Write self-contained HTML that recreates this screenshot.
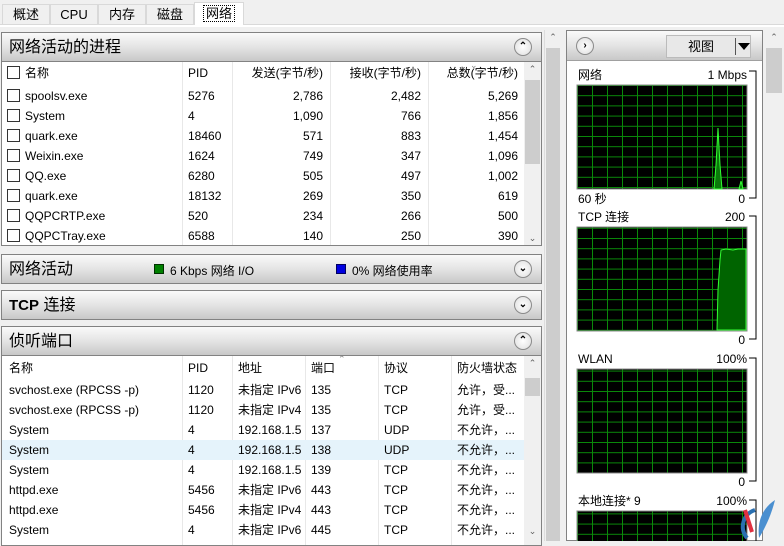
<!DOCTYPE html><html><head><meta charset="utf-8"><style>
*{margin:0;padding:0;box-sizing:border-box}
body{width:784px;height:541px;overflow:hidden;background:#f0f0f0;font-family:"Liberation Sans","Noto Sans CJK SC",sans-serif;font-size:12px;color:#000;position:relative}
.a{position:absolute}
.tab{position:absolute;top:4px;height:20px;border:1px solid #d9d9d9;border-bottom:none;background:#f0f0f0;font-size:13px;line-height:19px;text-align:center}
.hdr{position:absolute;left:1px;width:541px;height:30px;border:1px solid #828282;background:linear-gradient(#fafafa,#e4e4e4 50%,#c8c8c8);font-size:16px;line-height:29px;padding:0 0 0 7px}
.hdr span{line-height:normal}
.btn{position:absolute;width:18px;height:18px;border-radius:50%;border:1px solid #8a8a8a;background:radial-gradient(#fff,#ddd);font-size:10px;text-align:center;line-height:16px;font-weight:bold}
.tbl{position:absolute;left:1px;width:541px;background:#fff;border:1px solid #828282;border-top:none;overflow:hidden}
.row{position:absolute;left:0;height:20px;width:522px;line-height:20px}
.row span{position:absolute;top:0}
.cb{position:absolute;width:13px;height:13px;border:1px solid #333;top:3px;left:5px;background:#fff}
.vl{position:absolute;width:1px;background:#e8e8e8;top:0}
.sb{position:absolute;background:#f0f0f0}
.r{text-align:right}
</style></head><body>
<div class="a" style="left:0;top:24px;width:784px;height:3px;border-top:1px solid #d9d9d9;background:#fff"></div>
<div class="tab" style="left:2px;width:48px">概述</div>
<div class="tab" style="left:50px;width:48px">CPU</div>
<div class="tab" style="left:98px;width:48px">内存</div>
<div class="tab" style="left:146px;width:48px">磁盘</div>
<div class="tab" style="left:194px;top:2px;height:23px;width:50px;background:#fff;line-height:21px"><span style="border:1px dotted #000;padding:0 2px">网络</span></div>

<!-- left panel -->
<div class="hdr" style="top:32px">网络活动的进程<div class="btn" style="right:9px;top:5px">⌃</div></div>
<div class="tbl" style="top:62px;height:184px">
 <div class="vl" style="left:180px;height:184px"></div><div class="vl" style="left:230px;height:184px"></div><div class="vl" style="left:328px;height:184px"></div><div class="vl" style="left:426px;height:184px"></div>
 <div class="row" style="top:1px"><div class="cb"></div><span style="left:23px">名称</span><span style="left:186px">PID</span><span class="r" style="left:232px;width:89px">发送(字节/秒)</span><span class="r" style="left:330px;width:89px">接收(字节/秒)</span><span class="r" style="left:428px;width:88px">总数(字节/秒)</span><span style="left:468px;top:-8px;font-size:9px;color:#888">⌄</span></div>
 <div class="row" style="top:24px"><div class="cb"></div><span style="left:23px">spoolsv.exe</span><span style="left:186px">5276</span><span class="r" style="left:232px;width:89px">2,786</span><span class="r" style="left:330px;width:89px">2,482</span><span class="r" style="left:428px;width:88px">5,269</span></div>
 <div class="row" style="top:44px"><div class="cb"></div><span style="left:23px">System</span><span style="left:186px">4</span><span class="r" style="left:232px;width:89px">1,090</span><span class="r" style="left:330px;width:89px">766</span><span class="r" style="left:428px;width:88px">1,856</span></div>
 <div class="row" style="top:64px"><div class="cb"></div><span style="left:23px">quark.exe</span><span style="left:186px">18460</span><span class="r" style="left:232px;width:89px">571</span><span class="r" style="left:330px;width:89px">883</span><span class="r" style="left:428px;width:88px">1,454</span></div>
 <div class="row" style="top:84px"><div class="cb"></div><span style="left:23px">Weixin.exe</span><span style="left:186px">1624</span><span class="r" style="left:232px;width:89px">749</span><span class="r" style="left:330px;width:89px">347</span><span class="r" style="left:428px;width:88px">1,096</span></div>
 <div class="row" style="top:104px"><div class="cb"></div><span style="left:23px">QQ.exe</span><span style="left:186px">6280</span><span class="r" style="left:232px;width:89px">505</span><span class="r" style="left:330px;width:89px">497</span><span class="r" style="left:428px;width:88px">1,002</span></div>
 <div class="row" style="top:124px"><div class="cb"></div><span style="left:23px">quark.exe</span><span style="left:186px">18132</span><span class="r" style="left:232px;width:89px">269</span><span class="r" style="left:330px;width:89px">350</span><span class="r" style="left:428px;width:88px">619</span></div>
 <div class="row" style="top:144px"><div class="cb"></div><span style="left:23px">QQPCRTP.exe</span><span style="left:186px">520</span><span class="r" style="left:232px;width:89px">234</span><span class="r" style="left:330px;width:89px">266</span><span class="r" style="left:428px;width:88px">500</span></div>
 <div class="row" style="top:164px"><div class="cb"></div><span style="left:23px">QQPCTray.exe</span><span style="left:186px">6588</span><span class="r" style="left:232px;width:89px">140</span><span class="r" style="left:330px;width:89px">250</span><span class="r" style="left:428px;width:88px">390</span></div>
 <div class="sb" style="left:522px;top:0;width:17px;height:184px"><div style="position:absolute;left:1px;top:18px;width:15px;height:84px;background:#cdcdcd"></div><div style="position:absolute;top:2px;width:17px;text-align:center;font-size:9px;color:#606060">⌃</div><div style="position:absolute;bottom:2px;width:17px;text-align:center;font-size:9px;color:#606060">⌄</div></div>
</div>

<div class="hdr" style="top:254px">网络活动<span class="a" style="left:152px;top:9px;width:10px;height:10px;background:#008000;border:1px solid #003000"></span><span class="a" style="left:168px;top:7px;font-size:12px">6 Kbps 网络 I/O</span><span class="a" style="left:334px;top:9px;width:10px;height:10px;background:#0000e0;border:1px solid #000060"></span><span class="a" style="left:350px;top:7px;font-size:12px">0% 网络使用率</span><div class="btn" style="right:9px;top:5px">⌄</div></div>
<div class="hdr" style="top:290px"><b style="font-size:15px">TCP</b> 连接<div class="btn" style="right:9px;top:5px">⌄</div></div>
<div class="hdr" style="top:326px">侦听端口<div class="btn" style="right:9px;top:5px">⌃</div></div>
<div class="tbl" style="top:356px;height:190px">
 <div class="vl" style="left:180px;height:190px"></div><div class="vl" style="left:230px;height:190px"></div><div class="vl" style="left:303px;height:190px"></div><div class="vl" style="left:376px;height:190px"></div><div class="vl" style="left:449px;height:190px"></div>
 <div class="row" style="background:#e5f3fb;top:84px"></div>
 <div class="row" style="top:2px"><span style="left:7px">名称</span><span style="left:186px">PID</span><span style="left:236px">地址</span><span style="left:309px">端口</span><span style="left:382px">协议</span><span style="left:455px">防火墙状态</span><span style="left:336px;top:-9px;font-size:9px;color:#888">⌃</span></div>
 <div class="row" style="top:24px"><span style="left:7px">svchost.exe (RPCSS -p)</span><span style="left:186px">1120</span><span style="left:236px">未指定 IPv6</span><span style="left:309px">135</span><span style="left:382px">TCP</span><span style="left:455px">允许，受...</span></div>
 <div class="row" style="top:44px"><span style="left:7px">svchost.exe (RPCSS -p)</span><span style="left:186px">1120</span><span style="left:236px">未指定 IPv4</span><span style="left:309px">135</span><span style="left:382px">TCP</span><span style="left:455px">允许，受...</span></div>
 <div class="row" style="top:64px"><span style="left:7px">System</span><span style="left:186px">4</span><span style="left:236px">192.168.1.5</span><span style="left:309px">137</span><span style="left:382px">UDP</span><span style="left:455px">不允许，...</span></div>
 <div class="row" style="top:84px"><span style="left:7px">System</span><span style="left:186px">4</span><span style="left:236px">192.168.1.5</span><span style="left:309px">138</span><span style="left:382px">UDP</span><span style="left:455px">不允许，...</span></div>
 <div class="row" style="top:104px"><span style="left:7px">System</span><span style="left:186px">4</span><span style="left:236px">192.168.1.5</span><span style="left:309px">139</span><span style="left:382px">TCP</span><span style="left:455px">不允许，...</span></div>
 <div class="row" style="top:124px"><span style="left:7px">httpd.exe</span><span style="left:186px">5456</span><span style="left:236px">未指定 IPv6</span><span style="left:309px">443</span><span style="left:382px">TCP</span><span style="left:455px">不允许，...</span></div>
 <div class="row" style="top:144px"><span style="left:7px">httpd.exe</span><span style="left:186px">5456</span><span style="left:236px">未指定 IPv4</span><span style="left:309px">443</span><span style="left:382px">TCP</span><span style="left:455px">不允许，...</span></div>
 <div class="row" style="top:164px"><span style="left:7px">System</span><span style="left:186px">4</span><span style="left:236px">未指定 IPv6</span><span style="left:309px">445</span><span style="left:382px">TCP</span><span style="left:455px">不允许，...</span></div>
 <div class="sb" style="left:522px;top:0;width:17px;height:190px"><div style="position:absolute;left:1px;top:22px;width:15px;height:18px;background:#cdcdcd"></div><div style="position:absolute;top:2px;width:17px;text-align:center;font-size:9px;color:#606060">⌃</div><div style="position:absolute;top:170px;width:17px;text-align:center;font-size:9px;color:#606060">⌄</div></div>
</div>
<!-- outer left scrollbar -->
<div class="sb" style="left:544px;top:30px;width:16px;height:511px;border-left:1px solid #ddd"><div style="position:absolute;left:1px;top:18px;width:14px;height:493px;background:#cdcdcd"></div><div style="position:absolute;top:2px;width:16px;text-align:center;font-size:9px;color:#606060">⌃</div></div>

<!-- right panel -->
<div class="a" style="left:566px;top:30px;width:197px;height:511px;border:1px solid #828282;background:#fff"></div>
<div class="a" style="left:567px;top:31px;width:195px;height:30px;background:linear-gradient(#fafafa,#e4e4e4 50%,#c8c8c8);border-bottom:1px solid #a0a0a0"></div>
<div class="btn" style="left:576px;top:37px">›</div>
<div class="a" style="left:666px;top:35px;width:85px;height:23px;background:#e8e8e8;border:1px solid #bbb;font-size:13px;line-height:21px;padding:0 0 0 21px">视图<span class="a" style="left:68px;top:2px;width:1px;height:17px;background:#555"></span><span class="a" style="left:71px;top:7px;border-left:6px solid transparent;border-right:6px solid transparent;border-top:7px solid #000"></span></div>
<svg class="a" style="left:566px;top:60px" width="197" height="481">
<defs><pattern id="g" x="11" y="25" width="15" height="10.2" patternUnits="userSpaceOnUse"><rect width="15" height="10.2" fill="#000"/><path d="M0.5 0V10.2M0 0.5H15" stroke="#0a8a0a" stroke-width="1"/></pattern></defs>
<g font-size="12" font-family="Liberation Sans, Noto Sans CJK SC, sans-serif" fill="#000">
<text x="12" y="19">网络</text><text x="181" y="19" text-anchor="end">1 Mbps</text>
<rect x="11" y="25" width="170" height="104" fill="url(#g)" stroke="#888"/>
<path d="M148 129L150 105 152 68 154 105 156 129ZM173 129L175 121 177 129Z" fill="#0a7a0a" stroke="#3f3" stroke-width="1"/>
<text x="12" y="143">60 秒</text><text x="179" y="143" text-anchor="end">0</text>
<path d="M183 138H190V11H183" fill="none" stroke="#000"/>
<text x="12" y="161">TCP 连接</text><text x="179" y="161" text-anchor="end">200</text>
<rect x="11" y="167" width="170" height="104" fill="url(#g)" stroke="#888"/>
<path d="M151 270L152 230 154 200 155 190 160 189 167 190 172 189 180 189V270Z" fill="#006400" stroke="#3f3"/>
<text x="179" y="284" text-anchor="end">0</text>
<path d="M183 279H190V156H183" fill="none" stroke="#000"/>
<text x="12" y="303">WLAN</text><text x="181" y="303" text-anchor="end">100%</text>
<rect x="11" y="309" width="170" height="104" fill="url(#g)" stroke="#888"/>
<text x="179" y="426" text-anchor="end">0</text>
<path d="M183 421H190V298H183" fill="none" stroke="#000"/>
<text x="12" y="445">本地连接* 9</text><text x="181" y="445" text-anchor="end">100%</text>
<rect x="11" y="451" width="170" height="40" fill="url(#g)" stroke="#888"/>
<path d="M183 440H190V481" fill="none" stroke="#000"/>
</g></svg>
<div class="sb" style="left:764px;top:30px;width:20px;height:511px"><div style="position:absolute;left:2px;top:18px;width:16px;height:45px;background:#cdcdcd"></div><div style="position:absolute;top:2px;width:20px;text-align:center;font-size:9px;color:#606060">⌃</div></div>
<svg class="a" style="left:735px;top:498px" width="48" height="43"><path d="M20 12C8 16 4 30 12 40" fill="none" stroke="#2a6fb0" stroke-width="4"/><path d="M10 12L17 34" stroke="#e03040" stroke-width="4"/><path d="M40 2C28 10 22 22 24 40C30 30 36 18 40 2Z" fill="#4a8fd0"/></svg>
</body></html>
